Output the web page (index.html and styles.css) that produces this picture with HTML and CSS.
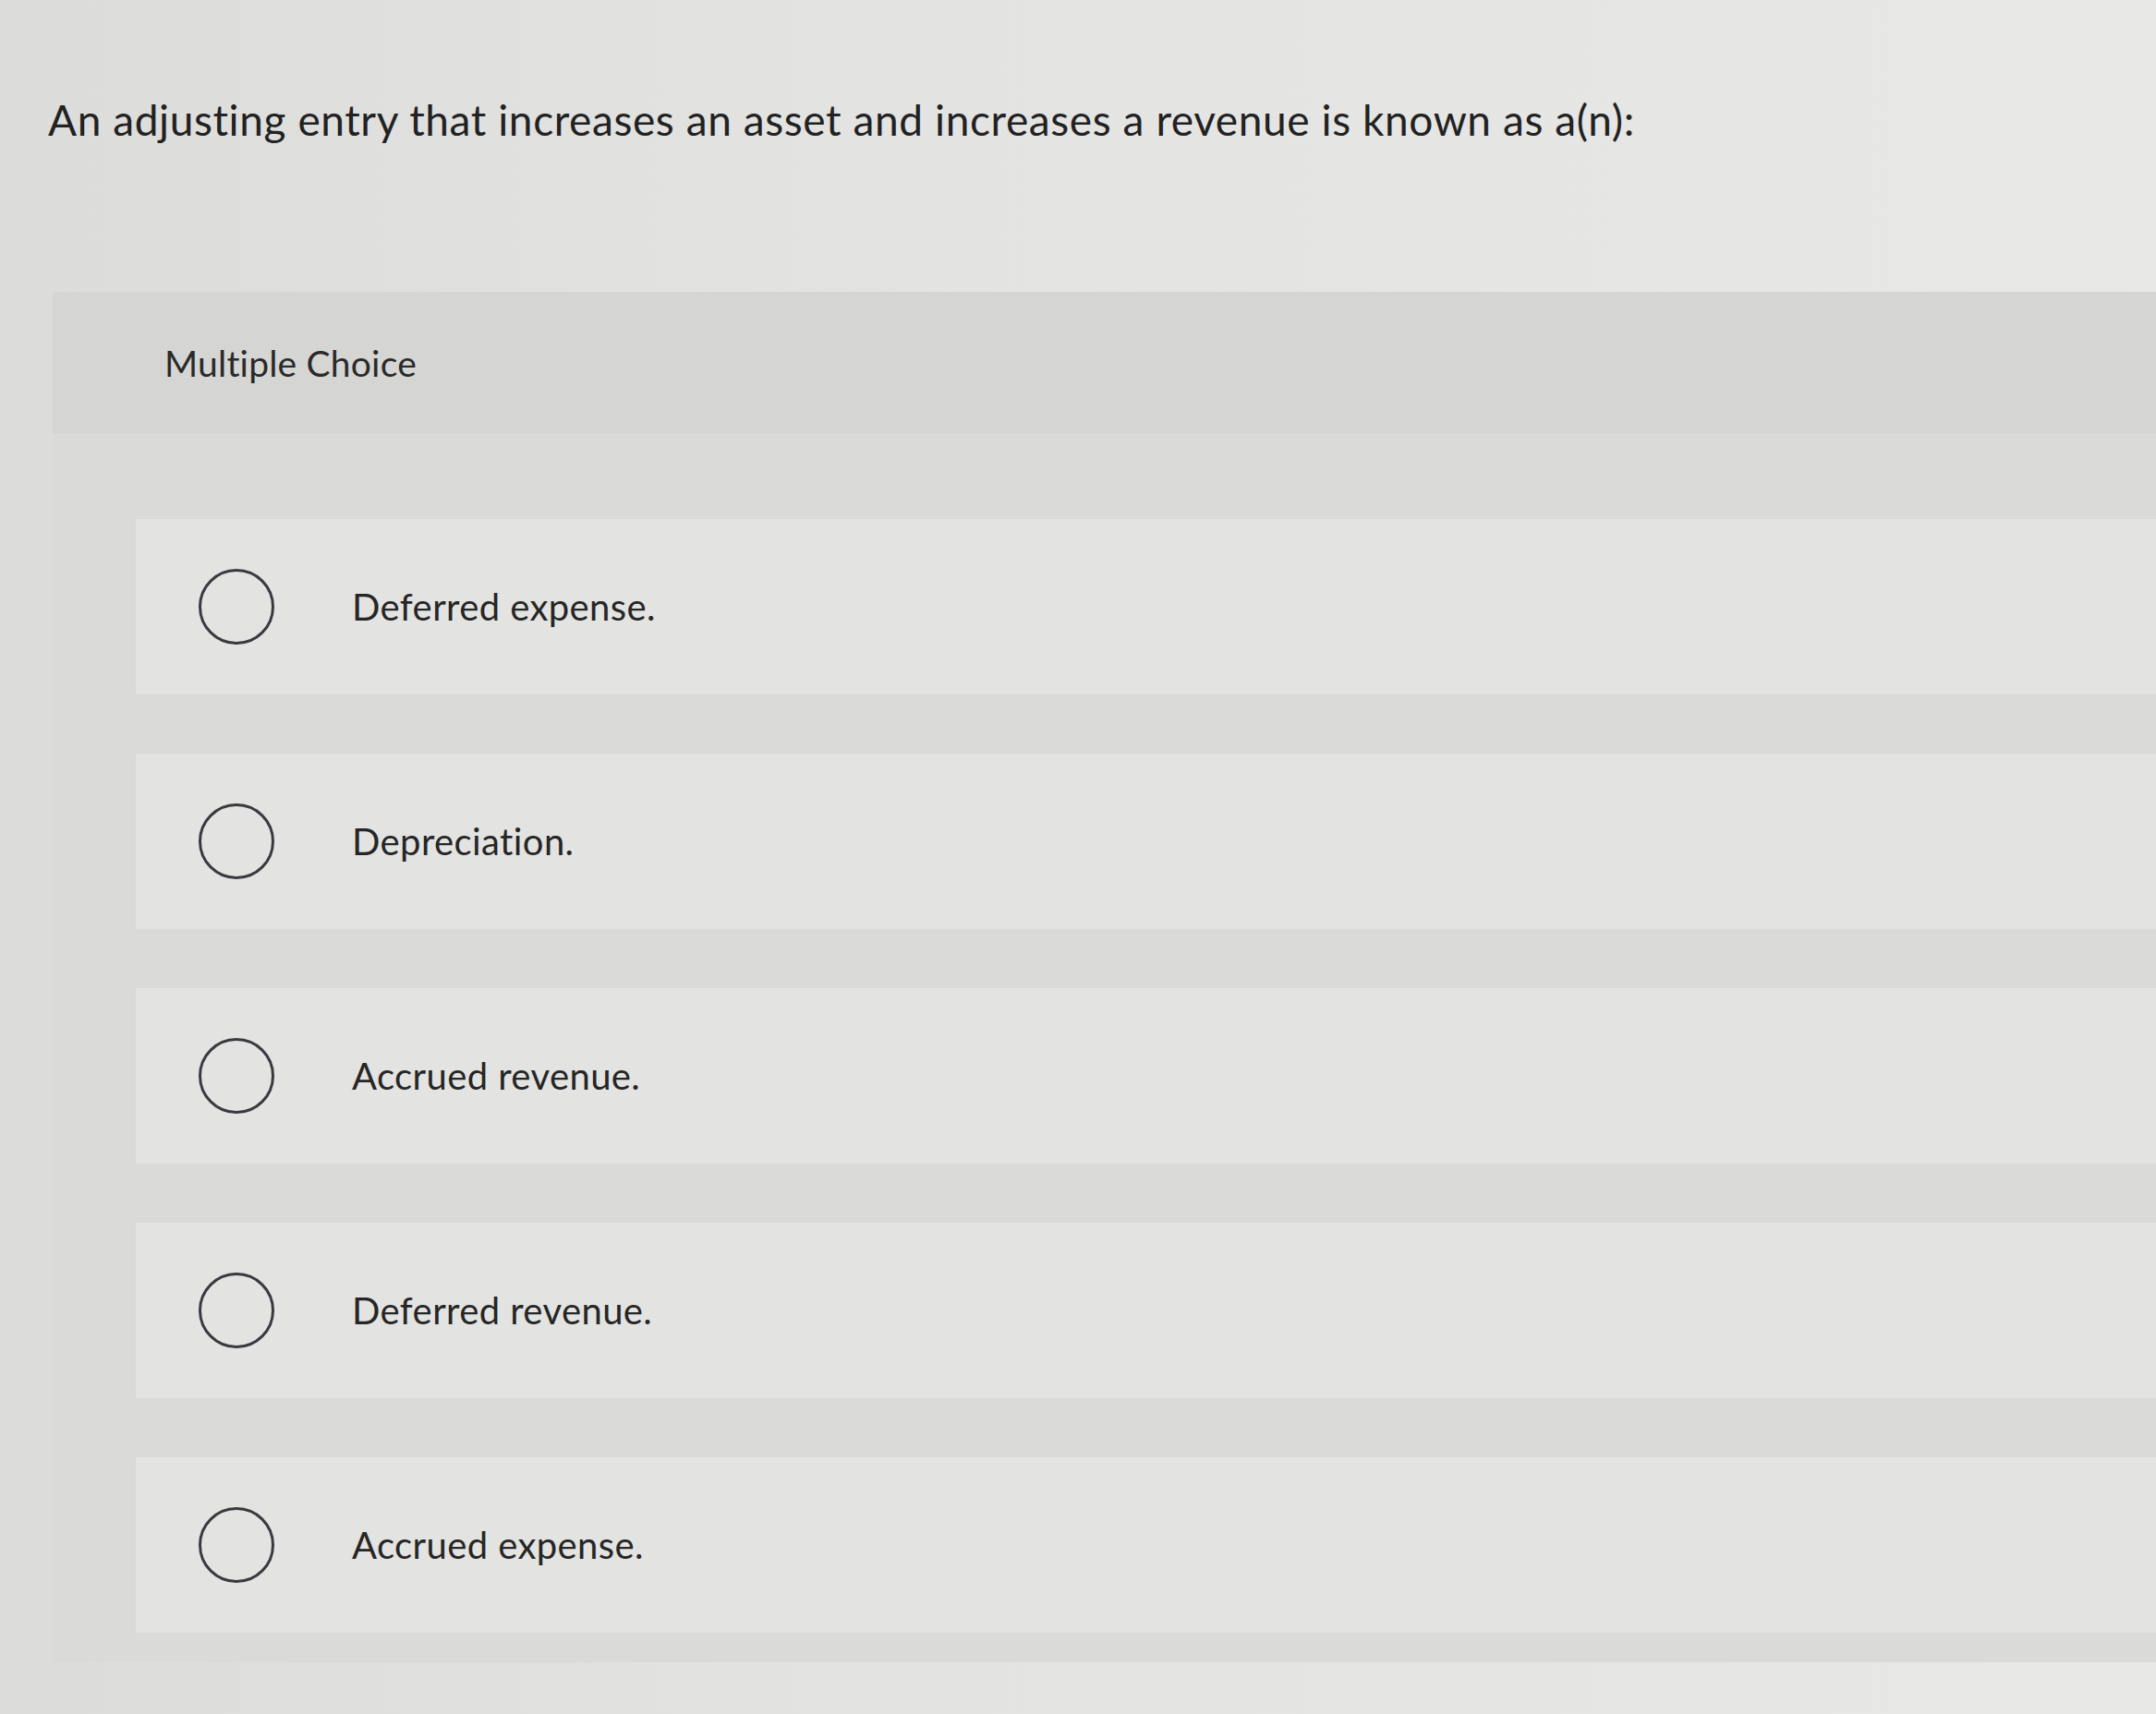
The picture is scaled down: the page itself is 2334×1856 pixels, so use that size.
FILE: index.html
```html
<!DOCTYPE html>
<html lang="en">
<head>
<meta charset="utf-8">
<title>Multiple Choice</title>
<link rel="stylesheet" href="styles.css">
</head>
<body>
<div class="page">
  <p class="question">An adjusting entry that increases an asset and increases a revenue is known as a(n):</p>
  <section class="panel">
    <div class="panel-header">Multiple Choice</div>
    <div class="options">
      <label class="option"><span class="radio"></span><span class="option-text">Deferred expense.</span></label>
      <label class="option"><span class="radio"></span><span class="option-text">Depreciation.</span></label>
      <label class="option"><span class="radio"></span><span class="option-text">Accrued revenue.</span></label>
      <label class="option"><span class="radio"></span><span class="option-text">Deferred revenue.</span></label>
      <label class="option"><span class="radio"></span><span class="option-text">Accrued expense.</span></label>
    </div>
  </section>
</div>
</body>
</html>
```
FILE: styles.css
```css
html, body {
  margin: 0;
  padding: 0;
}
body {
  width: 2334px;
  height: 1856px;
  overflow: hidden;
  background: linear-gradient(90deg, #dcdcdb 0%, #e3e3e2 40%, #e8e8e7 100%);
  font-family: Lato, "Open Sans", "Liberation Sans", sans-serif;
  color: #262626;
}
.page {
  display: flex;
  flex-direction: column;
}
.question {
  margin: 100px 0 0 52px;
  font-size: 46px;
  line-height: 60px;
  letter-spacing: 0.6px;
  color: #222;
}
.panel {
  margin: 156px 0 0 57px;
  background: #dadad8;
  display: flex;
  flex-direction: column;
  padding-bottom: 32px;
}
.panel-header {
  height: 154px;
  box-sizing: border-box;
  padding: 0 0 0 121px;
  display: flex;
  align-items: center;
  font-size: 39px;
  letter-spacing: 0.2px;
  color: #2a2a2a;
  background: #d5d5d3;
}
.options {
  display: flex;
  flex-direction: column;
  gap: 64px;
  padding: 92px 0 0 90px;
}
.option {
  height: 190px;
  display: flex;
  align-items: center;
  padding-left: 68px;
  background: #e3e3e1;
}
.radio {
  width: 76px;
  height: 76px;
  border: 3px solid #383a40;
  border-radius: 50%;
  flex: none;
}
.option-text {
  margin-left: 84px;
  font-size: 40px;
  letter-spacing: 0.4px;
  color: #262626;
}
```
